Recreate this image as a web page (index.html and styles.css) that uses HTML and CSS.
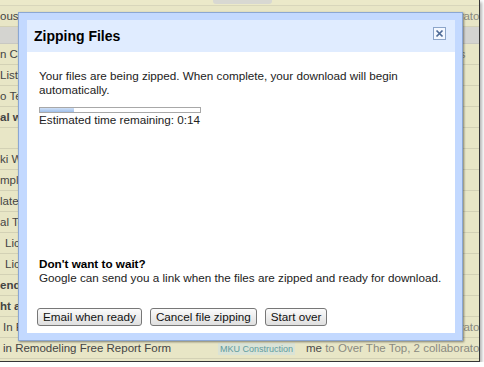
FILE: index.html
```html
<!DOCTYPE html>
<html lang="en">

<head>
    <meta charset="UTF-8">
    <title>Zipping Files</title>
    <link rel="stylesheet" href="styles.css">
</head>

<body>
    <div class="shot">
        <!-- Document list behind the dialog -->
        <div class="docs">
            <div class="strip"><span class="strip-pill"></span></div>
            <div class="row"><span class="name">ousing Survey Results</span><span class="tagcol"></span><span class="owner"><span class="me">me</span> to Over The Top, 2 collaborators</span></div>
            <div class="row head"></div>
            <div class="row"><span class="name">n Calendar</span><span class="tagcol"></span><span class="owner"><span class="me">me</span> to Over The Top, 3 partners</span></div>
            <div class="row"><span class="name">List of Suppliers</span><span class="tagcol"></span><span class="owner"></span></div>
            <div class="row"><span class="name">o Template</span><span class="tagcol"></span><span class="owner"></span></div>
            <div class="row unread"><span class="name">al workflow</span><span class="tagcol"></span><span class="owner"></span></div>
            <div class="row"><span class="name"></span><span class="tagcol"></span><span class="owner"></span></div>
            <div class="row"><span class="name">ki Wiki</span><span class="tagcol"></span><span class="owner"></span></div>
            <div class="row"><span class="name">mplate</span><span class="tagcol"></span><span class="owner"></span></div>
            <div class="row"><span class="name">late</span><span class="tagcol"></span><span class="owner"></span></div>
            <div class="row"><span class="name">al Template</span><span class="tagcol"></span><span class="owner"></span></div>
            <div class="row"><span class="name sub">License Agreement</span><span class="tagcol"></span><span class="owner"></span></div>
            <div class="row"><span class="name sub">License Renewal</span><span class="tagcol"></span><span class="owner"></span></div>
            <div class="row unread"><span class="name">endar</span><span class="tagcol"></span><span class="owner"></span></div>
            <div class="row unread"><span class="name">ht and</span><span class="tagcol"></span><span class="owner"></span></div>
            <div class="row"><span class="name in">In Remodeling</span><span class="tagcol"></span><span class="owner"><span class="me">me</span> to Over The Top, 2 collaborators</span></div>
            <div class="row"><span class="name in">in Remodeling Free Report Form</span><span class="tagcol"><span class="tag">MKU Construction</span></span><span class="owner"><span class="me">me</span> to Over The Top, 2 collaborators</span></div>
        </div>

        <!-- Zipping dialog -->
        <div class="dialog">
            <div class="dialog-box">
                <div class="dialog-title">
                    <h2>Zipping Files</h2>
                    <span class="close">
                        <svg width="9" height="9" viewBox="0 0 9 9"><path d="M1.5 1.5l6 6M7.5 1.5l-6 6" stroke="#4d6a96" stroke-width="1.7" fill="none"/></svg>
                    </span>
                </div>
                <div class="dialog-body">
                    <p>Your files are being zipped. When complete, your download will begin automatically.</p>
                    <div class="progress"><div class="progress-fill" style="width: 21%"></div></div>
                    <p>Estimated time remaining: 0:14</p>
                    <div class="wait">
                        <p class="wait-title">Don't want to wait?</p>
                        <p>Google can send you a link when the files are zipped and ready for download.</p>
                        <div class="buttons">
                            <button class="btn">Email when ready</button>
                            <button class="btn">Cancel file zipping</button>
                            <button class="btn">Start over</button>
                        </div>
                    </div>
                </div>
            </div>
        </div>
    </div>
</body>

</html>
```

FILE: styles.css
```css
body {
    margin: 0;
    background-color: #fff;
    font-family: "Liberation Sans", Arial, sans-serif;
}

.shot {
    position: relative;
    width: 479px;
    height: 361px;
    overflow: hidden;
    background-color: #e8e6c6;
    border-right: 1px solid #353535;
    border-bottom: 1px solid #353535;
    box-shadow: 2px 2px 3px rgba(0, 0, 0, 0.3);
}

/* background list */
.docs {
    font-size: 11.5px;
    color: #444;
}

.strip {
    height: 6px;
    box-sizing: border-box;
    border-bottom: 1px solid #d8d6bb;
    background-color: #ebe9c9;
}

.strip-pill {
    display: block;
    margin-left: 213px;
    width: 59px;
    height: 4px;
    border-radius: 0 0 3px 3px;
    background-color: #d8d8d2;
}

.row {
    display: flex;
    align-items: center;
    height: 21px;
    box-sizing: border-box;
    border-bottom: 1px solid #d3d1b5;
    white-space: nowrap;
}

.row.head {
    height: 17px;
    background-color: #d4d4d0;
    border-bottom-color: #c8c8c2;
}

.row.unread .name {
    font-weight: bold;
}

.name {
    width: 215px;
    flex-shrink: 0;
    overflow: hidden;
}

.name.sub {
    padding-left: 5px;
    box-sizing: border-box;
}

.name.in {
    padding-left: 3px;
    box-sizing: border-box;
}

.tagcol {
    width: 91px;
    flex-shrink: 0;
    padding-left: 3px;
    box-sizing: border-box;
}

.tag {
    display: inline-block;
    padding: 1px 2px;
    font-size: 9px;
    color: #5f9c9f;
    background-color: #dae3d6;
}

.owner {
    flex: 1;
    overflow: hidden;
    color: #8a8a80;
}

.owner .me {
    color: #4a4a4a;
}

/* dialog */
.dialog {
    position: absolute;
    left: 18px;
    top: 12px;
    width: 445px;
    height: 329px;
    box-sizing: border-box;
    display: flex;
    padding: 7px 7px 7px 8px;
    border: 1px solid #8ba7d3;
    background-color: #c3d9ff;
    box-shadow: 1px 1px 2px rgba(0, 0, 0, 0.45);
}

.dialog-box {
    flex: 1;
    display: flex;
    flex-direction: column;
    background-color: #fff;
}

.dialog-title {
    height: 32px;
    display: flex;
    align-items: center;
    justify-content: space-between;
    padding: 0 9px 0 7px;
    background-color: #e0ecff;
}

.dialog-title h2 {
    margin: 0;
    font-size: 14px;
    font-weight: bold;
    color: #000;
}

.close {
    align-self: flex-start;
    margin-top: 7px;
    width: 13px;
    height: 13px;
    box-sizing: border-box;
    display: flex;
    align-items: center;
    justify-content: center;
    border: 1px solid #8ca5c9;
    background-color: #f4f8ff;
}

.dialog-body {
    flex: 1;
    display: flex;
    flex-direction: column;
    padding: 17px 12px 7px;
    font-size: 11.7px;
    line-height: 14px;
    color: #222;
}

.dialog-body p {
    margin: 0;
}

.progress {
    width: 162px;
    height: 6px;
    box-sizing: border-box;
    margin: 10px 0 0;
    border: 1px solid #a8a8a8;
    background-color: #fff;
}

.progress-fill {
    height: 4px;
    background: linear-gradient(#cfe0f7, #9fbfe9);
}

.wait {
    margin-top: auto;
}

.wait-title {
    font-weight: bold;
    color: #000;
}

.buttons {
    display: flex;
    gap: 8px;
    margin: 23px 0 0 -2px;
}

.btn {
    height: 18px;
    padding: 0 5px;
    border: 1px solid #777;
    border-radius: 3px;
    background: linear-gradient(#fbfbfb, #dfdfdf);
    font-family: "Liberation Sans", Arial, sans-serif;
    font-size: 11.7px;
    line-height: 16px;
    color: #111;
}
```
